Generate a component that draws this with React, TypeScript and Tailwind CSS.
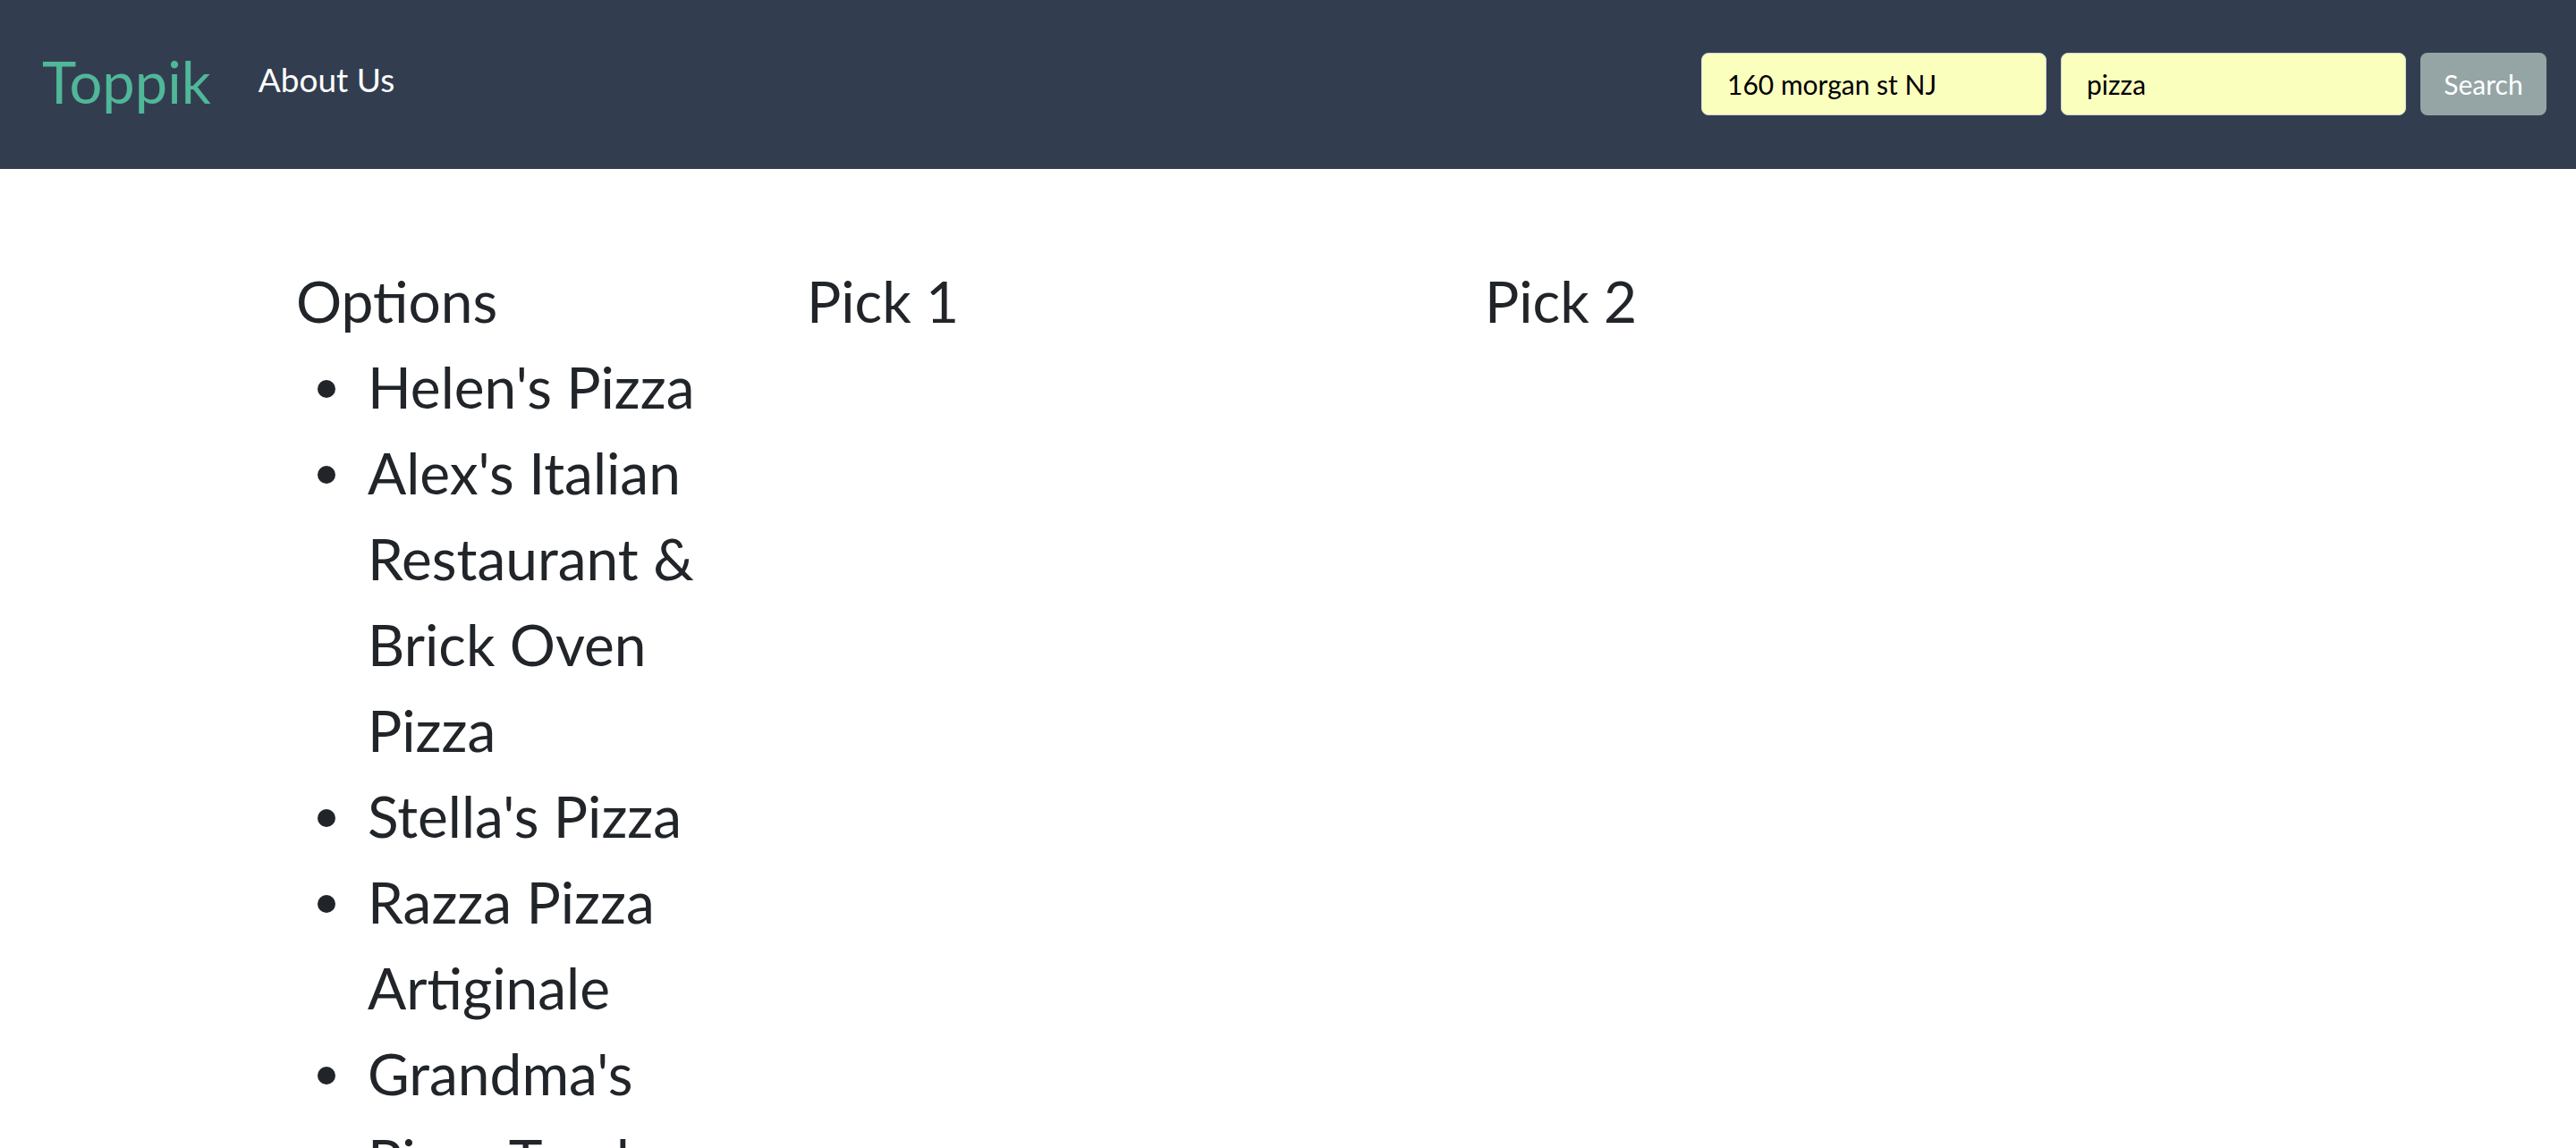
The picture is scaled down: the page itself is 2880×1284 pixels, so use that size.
import React from "react";

const items = [
  "Helen's Pizza",
  "Alex's Italian Restaurant & Brick Oven Pizza",
  "Stella's Pizza",
  "Razza Pizza Artiginale",
  "Grandma's Pizza Truck",
];

export default function App() {
  return (
    <div className="min-h-screen bg-white text-[#212529]" style={{ fontFamily: "Lato, 'Noto Sans', sans-serif" }}>
      <nav className="flex h-[189px] items-start bg-[#323e4f]">
        <a className="ml-[47px] mt-[59px] text-[65px] leading-none text-[#50b799]">Toppik</a>
        <a className="ml-[53px] mt-[70px] text-[37px] leading-none text-white">About Us</a>
        <div className="ml-auto mr-[33px] mt-[59px] flex gap-[16px]">
          <input
            readOnly
            value="160 morgan st NJ"
            className="h-[70px] w-[386px] rounded-[8px] border border-[#ced4da] bg-[#faffbd] pl-[28px] text-[30px] text-black outline-none"
          />
          <input
            readOnly
            value="pizza"
            className="h-[70px] w-[386px] rounded-[8px] border border-[#ced4da] bg-[#faffbd] pl-[28px] text-[30px] text-black outline-none"
          />
          <button className="h-[70px] w-[141px] rounded-[8px] bg-[#95a5a6] text-[30px] text-white">Search</button>
        </div>
      </nav>
      <main className="flex pl-[331px] pt-[100px] text-[64px] leading-[96px]">
        <div className="w-[571px] pr-[80px]">
          <div>Options</div>
          <ul>
            {items.map((t) => (
              <li key={t} className="flex">
                <span className="flex h-[96px] w-[80px] shrink-0 items-center pl-[24px] pt-[4px]">
                  <span className="block h-[20px] w-[20px] rounded-full bg-[#212529]" />
                </span>
                <span>{t}</span>
              </li>
            ))}
          </ul>
        </div>
        <div className="w-[758px]">
          <div>Pick 1</div>
        </div>
        <div className="flex-1">
          <div>Pick 2</div>
        </div>
      </main>
    </div>
  );
}
